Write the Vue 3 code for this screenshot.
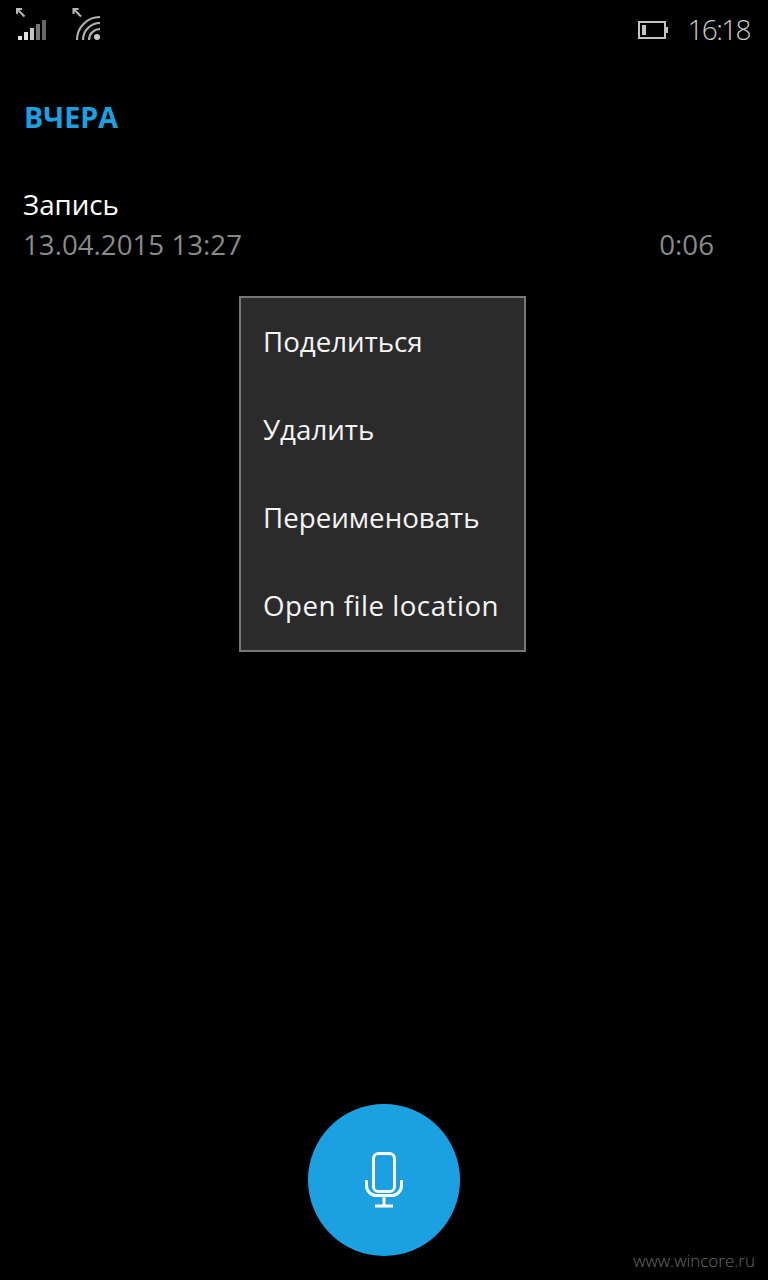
<script setup>
const menu = [
  { label: 'Поделиться' },
  { label: 'Удалить' },
  { label: 'Переименовать' },
  { label: 'Open file location', latin: true }
]
</script>

<template>
  <div class="screen">
    <header class="status">
      <svg class="signals" width="104" height="44" viewBox="0 0 104 44">
        <g fill="none" stroke="#b8b8b8" stroke-width="2">
          <path d="M24.5 16.5 L17 9 M17 14 V9 H22" />
          <path d="M81 16.5 L73.5 9 M73.5 14 V9 H78.5" />
        </g>
        <rect x="18" y="36" width="4" height="4" fill="#e0e0e0" />
        <rect x="24" y="32" width="4" height="8" fill="#e0e0e0" />
        <rect x="30" y="28" width="4" height="12" fill="#c4c4c4" />
        <rect x="36" y="24" width="4" height="16" fill="#777" />
        <rect x="42" y="20" width="4" height="20" fill="#666" />
        <g fill="none" stroke="#b0b0b0" stroke-width="2.2">
          <path d="M77 40 A23 23 0 0 1 100 17" />
          <path d="M83 40 A17 17 0 0 1 100 23" />
          <path d="M89 40 A11 11 0 0 1 100 29" />
        </g>
        <circle cx="97" cy="37" r="3" fill="#c8c8c8" />
      </svg>
      <div class="status-right">
        <svg width="30" height="18" viewBox="0 0 30 18">
          <rect x="1" y="1" width="26" height="16" fill="none" stroke="#c4c4c4" stroke-width="2" />
          <rect x="4" y="4" width="4" height="10" fill="#c4c4c4" />
          <rect x="28" y="6" width="2" height="6" fill="#c4c4c4" />
        </svg>
        <span class="clock">16:18</span>
      </div>
    </header>

    <main class="content">
      <h2 class="group">ВЧЕРА</h2>
      <div class="record">
        <div class="record-title">Запись</div>
        <div class="record-meta">
          <span>13.04.2015 13:27</span>
          <span>0:06</span>
        </div>
      </div>
      <ul class="menu">
        <li v-for="item in menu" :key="item.label" :class="{ latin: item.latin }">{{ item.label }}</li>
      </ul>
    </main>

    <footer class="footer">
      <button class="fab" aria-label="Запись">
        <svg width="50" height="64" viewBox="0 0 50 64">
          <g fill="none" stroke="#fff" stroke-width="3">
            <rect x="14.5" y="5.5" width="21" height="38" rx="5" />
            <path d="M7.5 32 V37.5 A10 10 0 0 0 17.5 47.5 H32.5 A10 10 0 0 0 42.5 37.5 V32" />
            <path d="M25 47.5 V58 M16 58 H34" />
          </g>
        </svg>
      </button>
    </footer>

    <span class="mark">www.wincore.ru</span>
  </div>
</template>

<style>
html, body { margin: 0; background: #000; }
</style>

<style scoped>
.screen {
  position: relative;
  display: flex;
  flex-direction: column;
  width: 768px;
  height: 1280px;
  background: #000;
  overflow: hidden;
  font-family: "Open Sans", "Noto Sans", sans-serif;
  color: #fff;
}
.status {
  display: flex;
  justify-content: space-between;
  align-items: flex-start;
  height: 44px;
  flex: none;
}
.signals { display: block; }
.status-right {
  display: flex;
  align-items: center;
  gap: 19px;
  height: 60px;
  padding-right: 18px;
}
.clock {
  margin-top: -2px;
  font-size: 28px;
  font-weight: 300;
  letter-spacing: -1.6px;
  color: #cccccc;
  line-height: 1;
}
.content {
  flex: 1;
  display: flex;
  flex-direction: column;
}
.group {
  margin: 53px 0 0 24px;
  font-size: 28.7px;
  line-height: 40px;
  font-weight: 700;
  color: #1ba1e2;
}
.record { margin: 47px 54px 0 23px; }
.record-title {
  font-size: 27.7px;
  line-height: 40px;
}
.record-meta {
  display: flex;
  justify-content: space-between;
  font-size: 27.7px;
  line-height: 40px;
  color: #8a8a8a;
}
.menu {
  list-style: none;
  box-sizing: border-box;
  width: 287px;
  height: 356px;
  margin: 32px 0 0 239px;
  padding: 0;
  background: #2b2b2b;
  border: 2px solid #777;
}
.menu li {
  box-sizing: border-box;
  height: 88px;
  display: flex;
  align-items: center;
  padding: 0 0 2px 22px;
  font-size: 27.7px;
  color: #f4f4f4;
  white-space: nowrap;
}
.menu li.latin { letter-spacing: 0.5px; }
.footer {
  flex: none;
  display: flex;
  justify-content: center;
  padding-bottom: 24px;
}
.fab {
  display: flex;
  align-items: center;
  justify-content: center;
  width: 152px;
  height: 152px;
  padding: 0;
  border: 0;
  border-radius: 50%;
  background: #1ba1e2;
}
.mark {
  position: absolute;
  right: 13px;
  bottom: 8px;
  font-size: 17px;
  font-weight: 300;
  color: #6a6a6a;
}
</style>
